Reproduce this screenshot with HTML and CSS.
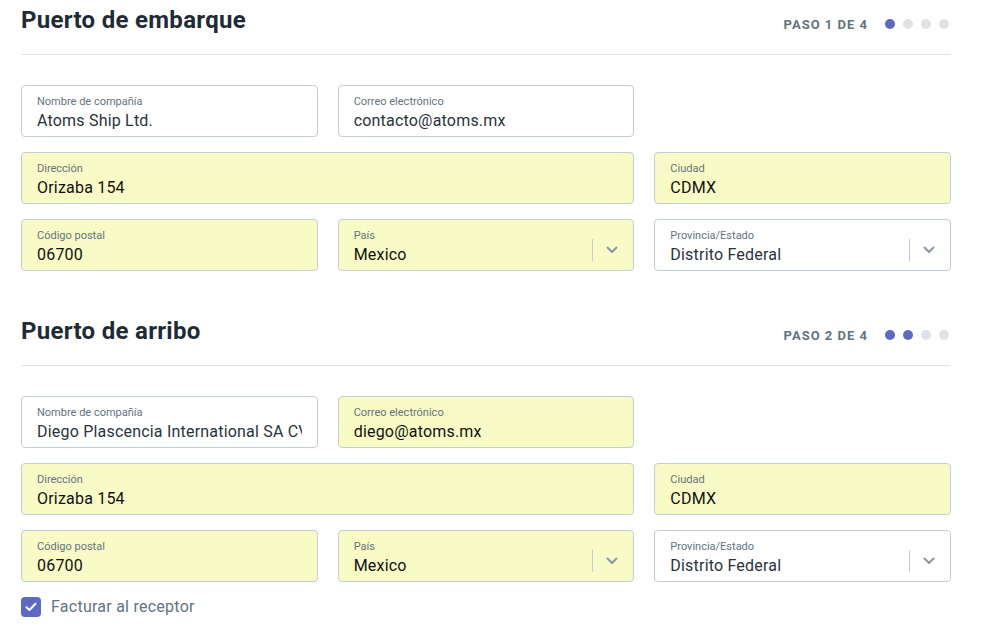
FILE: index.html
```html
<!DOCTYPE html>
<html lang="es">
<head>
<meta charset="utf-8">
<link rel="stylesheet" href="styles.css">
</head>
<body>
<div class="page">
  <section class="section">
    <header class="section-header">
      <h2 class="title">Puerto de embarque</h2>
      <div class="steps">
        <span class="step-label">Paso 1 de 4</span>
        <span class="dots"><i class="dot on"></i><i class="dot"></i><i class="dot"></i><i class="dot"></i></span>
      </div>
    </header>
    <div class="grid">
      <div class="field"><span class="label">Nombre de compañía</span><span class="value">Atoms Ship Ltd.</span></div>
      <div class="field"><span class="label">Correo electrónico</span><span class="value">contacto@atoms.mx</span></div>
      <div class="empty"></div>
      <div class="field fill span2"><span class="label">Dirección</span><span class="value">Orizaba 154</span></div>
      <div class="field fill"><span class="label">Ciudad</span><span class="value">CDMX</span></div>
      <div class="field fill"><span class="label">Código postal</span><span class="value">06700</span></div>
      <div class="field fill select"><div class="sel-text"><span class="label">País</span><span class="value">Mexico</span></div><span class="sep"></span><svg class="chev" width="12" height="8" viewBox="0 0 12 8"><path d="M1.5 1.5 L6 6 L10.5 1.5" fill="none" stroke="#8a96a6" stroke-width="2" stroke-linecap="round" stroke-linejoin="round"/></svg></div>
      <div class="field select"><div class="sel-text"><span class="label">Provincia/Estado</span><span class="value">Distrito Federal</span></div><span class="sep"></span><svg class="chev" width="12" height="8" viewBox="0 0 12 8"><path d="M1.5 1.5 L6 6 L10.5 1.5" fill="none" stroke="#8a96a6" stroke-width="2" stroke-linecap="round" stroke-linejoin="round"/></svg></div>
    </div>
  </section>

  <section class="section second">
    <header class="section-header">
      <h2 class="title">Puerto de arribo</h2>
      <div class="steps">
        <span class="step-label">Paso 2 de 4</span>
        <span class="dots"><i class="dot on"></i><i class="dot on"></i><i class="dot"></i><i class="dot"></i></span>
      </div>
    </header>
    <div class="grid">
      <div class="field"><span class="label">Nombre de compañía</span><span class="value">Diego Plascencia International SA CV</span></div>
      <div class="field fill"><span class="label">Correo electrónico</span><span class="value">diego@atoms.mx</span></div>
      <div class="empty"></div>
      <div class="field fill span2"><span class="label">Dirección</span><span class="value">Orizaba 154</span></div>
      <div class="field fill"><span class="label">Ciudad</span><span class="value">CDMX</span></div>
      <div class="field fill"><span class="label">Código postal</span><span class="value">06700</span></div>
      <div class="field fill select"><div class="sel-text"><span class="label">País</span><span class="value">Mexico</span></div><span class="sep"></span><svg class="chev" width="12" height="8" viewBox="0 0 12 8"><path d="M1.5 1.5 L6 6 L10.5 1.5" fill="none" stroke="#8a96a6" stroke-width="2" stroke-linecap="round" stroke-linejoin="round"/></svg></div>
      <div class="field select"><div class="sel-text"><span class="label">Provincia/Estado</span><span class="value">Distrito Federal</span></div><span class="sep"></span><svg class="chev" width="12" height="8" viewBox="0 0 12 8"><path d="M1.5 1.5 L6 6 L10.5 1.5" fill="none" stroke="#8a96a6" stroke-width="2" stroke-linecap="round" stroke-linejoin="round"/></svg></div>
    </div>
    <label class="check">
      <span class="box"><svg width="12" height="10" viewBox="0 0 12 10"><path d="M1.5 5.2 L4.5 8 L10.5 1.8" fill="none" stroke="#fff" stroke-width="2" stroke-linecap="round" stroke-linejoin="round"/></svg></span>
      <span class="check-text">Facturar al receptor</span>
    </label>
  </section>
</div>
</body>
</html>
```

FILE: styles.css
```css
* { box-sizing: border-box; }
html, body { margin: 0; padding: 0; background: #fff; }
body { font-family: Roboto, "Liberation Sans", sans-serif; color: #212b36; }
.page { width: 930px; margin-left: 21px; }
.section-header {
  display: flex;
  justify-content: space-between;
  align-items: flex-start;
  padding: 4px 0 18px;
  border-bottom: 1px solid #dfe3e8;
}
.title {
  margin: 0;
  font-size: 24px;
  line-height: 32px;
  font-weight: 700;
  letter-spacing: 0.3px;
  color: #212b36;
}
.steps {
  display: flex;
  align-items: center;
  margin-top: 8px;
  height: 24px;
  padding-right: 2px;
}
.step-label {
  text-transform: uppercase;
  font-size: 13px;
  font-weight: 700;
  letter-spacing: 1px;
  color: #637381;
}
.dots { display: flex; gap: 8px; margin-left: 17px; }
.dot { display: block; width: 10px; height: 10px; border-radius: 50%; background: #dfe3e8; }
.dot.on { background: #5c6ac4; }
.grid {
  display: grid;
  grid-template-columns: repeat(3, 1fr);
  gap: 15px 20px;
  margin-top: 30px;
}
.span2 { grid-column: span 2; }
.field {
  height: 52px;
  border: 1px solid #c4cdd5;
  border-radius: 4px;
  background: #fff;
  padding: 9px 15px 0;
  display: flex;
  flex-direction: column;
  overflow: hidden;
}
.field.fill { background: #f8fbc6; }
.label {
  font-size: 11px;
  line-height: 14px;
  color: #637381;
  white-space: nowrap;
}
.value {
  margin-top: 2px;
  font-size: 16px;
  line-height: 20px;
  letter-spacing: 0.2px;
  color: #2a333d;
  white-space: nowrap;
  overflow: hidden;
}
.fill .value { color: #111; }
.select { flex-direction: row; align-items: center; padding-right: 0; }
.sel-text { flex: 1; display: flex; flex-direction: column; align-self: flex-start; }
.sep { width: 1px; height: 22px; background: #c4cdd5; }
.chev { margin: 0 15px 0 13px; }
.second { margin-top: 40px; }
.check {
  display: flex;
  align-items: center;
  margin-top: 15px;
  gap: 10px;
}
.box {
  width: 20px;
  height: 20px;
  border-radius: 4px;
  background: #5c6ac4;
  display: flex;
  align-items: center;
  justify-content: center;
}
.check-text { font-size: 16px; line-height: 20px; letter-spacing: 0.25px; color: #637381; }
```
